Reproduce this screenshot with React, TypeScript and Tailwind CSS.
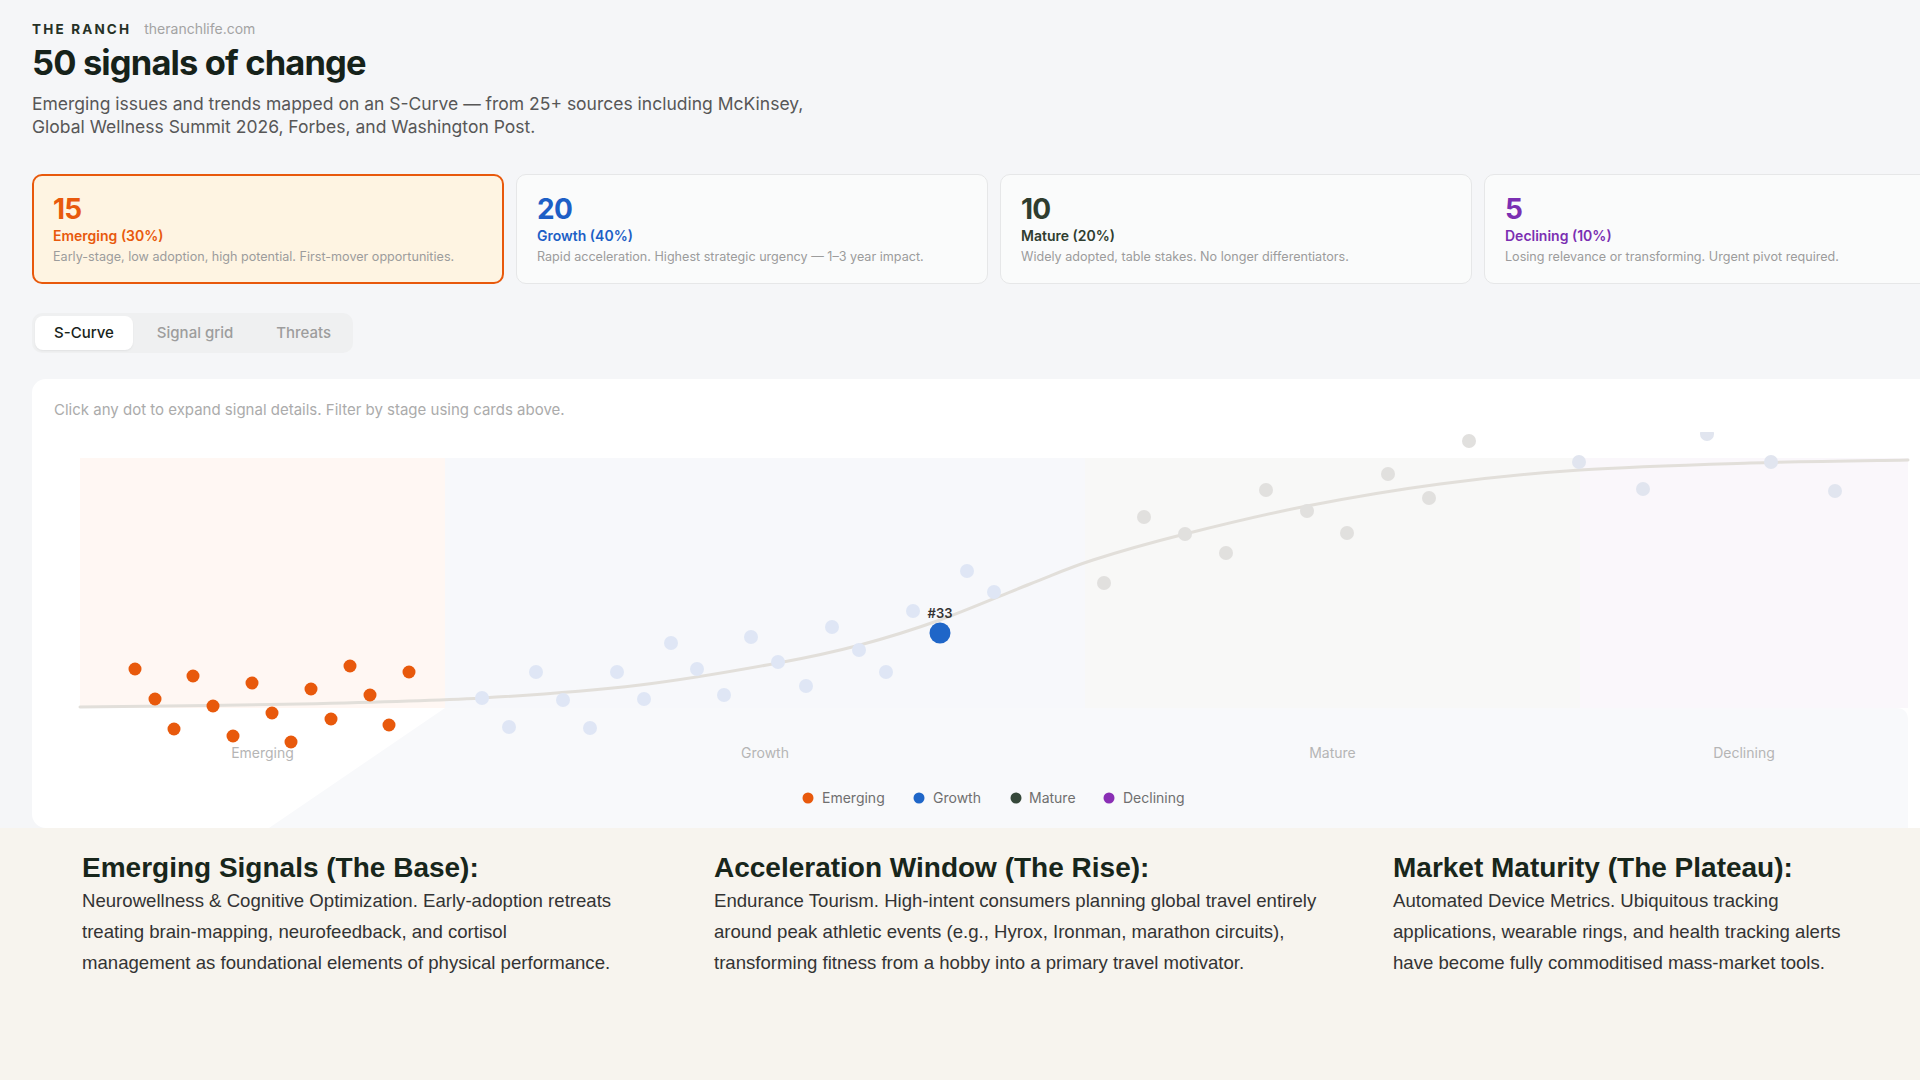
import React from "react";

type Pt = [number, number];

const stages = [
  {
    count: 15,
    label: "Emerging (30%)",
    desc: "Early-stage, low adoption, high potential. First-mover opportunities.",
    tone: "text-[#e8590c]",
    active: true,
  },
  {
    count: 20,
    label: "Growth (40%)",
    desc: "Rapid acceleration. Highest strategic urgency — 1–3 year impact.",
    tone: "text-[#1d5fc6]",
  },
  {
    count: 10,
    label: "Mature (20%)",
    desc: "Widely adopted, table stakes. No longer differentiators.",
    tone: "text-[#2f3d2f]",
  },
  {
    count: 5,
    label: "Declining (10%)",
    desc: "Losing relevance or transforming. Urgent pivot required.",
    tone: "text-[#7b2fb2]",
  },
];

// chart coordinates are relative to the panel (panel top-left = 0,0 at x 32, y 432 on page)
const curvePts: Pt[] = [
  [48, 275], [268, 272], [450, 266], [608, 253], [746, 231], [828, 213],
  [908, 188], [998, 152], [1061, 128], [1153, 102], [1275, 74], [1408, 52],
  [1548, 38], [1718, 31], [1876, 28],
];

const emerging: Pt[] = [
  [103, 237], [123, 267], [161, 244], [142, 297], [181, 274], [220, 251],
  [201, 304], [240, 281], [259, 310], [279, 257], [299, 287], [318, 234],
  [338, 263], [357, 293], [377, 240],
];

const growth: Pt[] = [
  [450, 266], [477, 295], [504, 240], [531, 268], [558, 296], [585, 240],
  [612, 267], [639, 211], [665, 237], [692, 263], [719, 205], [746, 230],
  [774, 254], [800, 195], [827, 218], [854, 240], [881, 179], [935, 139],
  [962, 160],
];

const mature: Pt[] = [
  [1072, 151], [1112, 85], [1153, 102], [1194, 121], [1234, 58], [1275, 79],
  [1315, 101], [1356, 42], [1397, 66], [1437, 9],
];

const declining: Pt[] = [
  [1547, 30], [1611, 57], [1675, 2], [1739, 30], [1803, 59],
];

const regions = [
  { x: 48, w: 365, fill: "#fff7f3", label: "Emerging" },
  { x: 413, w: 640, fill: "#f7f8fb", label: "Growth" },
  { x: 1053, w: 495, fill: "#f8f8f7", label: "Mature" },
  { x: 1548, w: 328, fill: "#faf7fb", label: "Declining" },
];

const legend = [
  { cx: 776, tx: 790, color: "#e8590c", label: "Emerging" },
  { cx: 887, tx: 901, color: "#1f66c8", label: "Growth" },
  { cx: 984, tx: 997, color: "#36483a", label: "Mature" },
  { cx: 1077, tx: 1091, color: "#8a2fb5", label: "Declining" },
];

function smoothPath(pts: Pt[]) {
  let d = `M${pts[0][0]},${pts[0][1]}`;
  for (let i = 0; i < pts.length - 1; i++) {
    const p0 = pts[i - 1] || pts[i];
    const p1 = pts[i];
    const p2 = pts[i + 1];
    const p3 = pts[i + 2] || p2;
    const c1x = p1[0] + (p2[0] - p0[0]) / 6;
    const c1y = p1[1] + (p2[1] - p0[1]) / 6;
    const c2x = p2[0] - (p3[0] - p1[0]) / 6;
    const c2y = p2[1] - (p3[1] - p1[1]) / 6;
    d += ` C${c1x.toFixed(1)},${c1y.toFixed(1)} ${c2x.toFixed(1)},${c2y.toFixed(1)} ${p2[0]},${p2[1]}`;
  }
  return d;
}

function SCurveChart() {
  return (
    <svg width={1924} height={396} viewBox="0 0 1924 396" className="block">
      {regions.map((r) => (
        <rect key={r.label} x={r.x} y={26} width={r.w} height={250} fill={r.fill} />
      ))}
      <path d="M413,276 L1864,276 Q1876,276 1876,288 L1876,396 L237,396 Z" fill="#f8f9fb" />

      <path d={smoothPath(curvePts)} fill="none" stroke="#e2dfda" strokeWidth={3} strokeLinecap="round" />

      {mature.map(([x, y], i) => (
        <circle key={`m${i}`} cx={x} cy={y} r={7} fill="#e1e0de" />
      ))}
      {declining.map(([x, y], i) => (
        <circle key={`d${i}`} cx={x} cy={y} r={7} fill="#e1e5ef" />
      ))}
      {growth.map(([x, y], i) => (
        <circle key={`g${i}`} cx={x} cy={y} r={7} fill="#dfe6f5" />
      ))}
      {emerging.map(([x, y], i) => (
        <circle key={`e${i}`} cx={x} cy={y} r={6.5} fill="#e8590c" />
      ))}

      <circle cx={908} cy={201} r={10.5} fill="#1f66c8" />
      <text x={908} y={186} textAnchor="middle" className="fill-[#333333] text-[13px] font-semibold">
        #33
      </text>

      {regions.map((r) => (
        <text
          key={`l${r.label}`}
          x={r.x + r.w / 2}
          y={326}
          textAnchor="middle"
          className="fill-[#b5b5b5] text-[14px]"
        >
          {r.label}
        </text>
      ))}

      {legend.map((l) => (
        <g key={l.label}>
          <circle cx={l.cx} cy={366} r={5.5} fill={l.color} />
          <text x={l.tx} y={371} className="fill-[#6f6f6f] text-[14px]">
            {l.label}
          </text>
        </g>
      ))}
    </svg>
  );
}

const notes = [
  {
    title: "Emerging Signals (The Base):",
    body: "Neurowellness & Cognitive Optimization. Early-adoption retreats treating brain-mapping, neurofeedback, and cortisol management as foundational elements of physical performance.",
    width: "max-w-[536px]",
  },
  {
    title: "Acceleration Window (The Rise):",
    body: "Endurance Tourism. High-intent consumers planning global travel entirely around peak athletic events (e.g., Hyrox, Ironman, marathon circuits), transforming fitness from a hobby into a primary travel motivator.",
    width: "max-w-[640px]",
  },
  {
    title: "Market Maturity (The Plateau):",
    body: "Automated Device Metrics. Ubiquitous tracking applications, wearable rings, and health tracking alerts have become fully commoditised mass-market tools.",
    width: "max-w-[470px]",
  },
];

export default function App() {
  return (
    <div className="flex min-h-screen w-full flex-col overflow-hidden bg-[#f5f6f8] font-['Inter',sans-serif]">
      <div className="px-8 pt-[21px]">
        <div className="flex items-baseline gap-[13px]">
          <span className="text-[13.5px] font-bold leading-[16px] tracking-[0.16em] text-[#263126]">THE RANCH</span>
          <span className="text-[14px] leading-[16px] text-[#a3a3a3]">theranchlife.com</span>
        </div>
        <h1 className="mt-[6px] text-[34.5px] font-bold leading-[40px] tracking-tight text-[#16221a]">
          50 signals of change
        </h1>
        <p className="mt-[9px] max-w-[810px] text-[17.5px] leading-[23px] text-[#575757]">
          Emerging issues and trends mapped on an S-Curve — from 25+ sources including McKinsey, Global Wellness
          Summit 2026, Forbes, and Washington Post.
        </p>

        <div className="mt-[36px] grid w-[1924px] grid-cols-4 gap-3">
          {stages.map((s) => (
            <div
              key={s.label}
              className={
                s.active
                  ? "h-[110px] rounded-[10px] border-2 border-[#e8590c] bg-[#fef4e2] px-[19px] pt-[17px]"
                  : "h-[110px] rounded-[10px] border border-[#e6e7e8] bg-[#fafbfb] px-[20px] pt-[18px]"
              }
            >
              <div className={`text-[28px] font-bold leading-[32px] tracking-tight ${s.tone}`}>{s.count}</div>
              <div className={`mt-[2px] text-[14px] font-semibold leading-[18px] ${s.tone}`}>{s.label}</div>
              <div className="mt-[3px] text-[12.6px] leading-[18px] text-[#9c9c9c]">{s.desc}</div>
            </div>
          ))}
        </div>

        <div className="mt-[29px] inline-flex gap-[5px] rounded-[10px] bg-[#eff0f1] p-[3px]">
          <button className="h-[34px] rounded-[8px] bg-white px-[19px] text-[15px] font-medium text-[#17231a] shadow-[0_1px_2px_rgba(0,0,0,0.06)]">
            S-Curve
          </button>
          <button className="h-[34px] rounded-[8px] px-[19px] text-[15px] font-medium text-[#9d9d9d]">Signal grid</button>
          <button className="h-[34px] rounded-[8px] px-[19px] text-[15px] font-medium text-[#9d9d9d]">Threats</button>
        </div>

        <div className="mt-[26px] w-[1924px] overflow-hidden rounded-[14px] bg-white">
          <p className="px-[22px] pt-[20px] text-[15px] leading-[22px] text-[#ababab]">
            Click any dot to expand signal details. Filter by stage using cards above.
          </p>
          <div className="mt-[11px]">
            <SCurveChart />
          </div>
        </div>
      </div>

      <div className="flex-1 bg-[#f7f4ee] pl-[82px] pt-[23px] font-['Liberation_Sans',Arial,sans-serif]">
        <div className="grid grid-cols-[632px_679px_470px]">
          {notes.map((n) => (
            <div key={n.title}>
              <h2 className="text-[28px] font-bold leading-[34px] text-[#18261b]">{n.title}</h2>
              <p className={`${n.width} text-[18.6px] leading-[31px] text-[#333333]`}>{n.body}</p>
            </div>
          ))}
        </div>
      </div>
    </div>
  );
}
